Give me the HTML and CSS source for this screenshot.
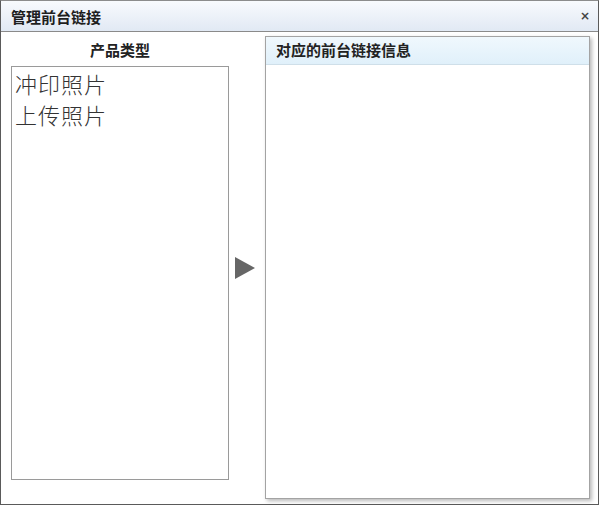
FILE: index.html
```html
<!DOCTYPE html>
<html lang="zh">
<head>
<meta charset="utf-8">
<title>管理前台链接</title>
<link rel="stylesheet" href="styles.css">
</head>
<body>
<div class="dialog">
  <div class="titlebar">
    <span class="title">管理前台链接</span>
    <span class="close">×</span>
  </div>
  <div class="content">
    <div class="left">
      <div class="label">产品类型</div>
      <div class="list">
        <div class="item">冲印照片</div>
        <div class="item">上传照片</div>
      </div>
    </div>
    <div class="arrow-col">
      <svg class="arrow" width="20" height="22" viewBox="0 0 20 22"><polygon points="0,0 20,11 0,22" fill="#666"/></svg>
    </div>
    <div class="panel">
      <div class="panel-head">对应的前台链接信息</div>
      <div class="panel-body"></div>
    </div>
  </div>
</div>
</body>
</html>
```
FILE: styles.css
```css
html, body {
  margin: 0;
  padding: 0;
  background: #fff;
}
body {
  font-family: "Noto Sans CJK SC", "Noto Sans", sans-serif;
  color: #222;
}
.dialog {
  width: 599px;
  height: 505px;
  box-sizing: border-box;
  border: 1px solid #5a5a5a;
  border-top-color: #8c8c8c;
  background: #fff;
  display: flex;
  flex-direction: column;
}
.titlebar {
  height: 30px;
  border-bottom: 1px solid #8a8a8a;
  background: linear-gradient(#f8fafd, #e1e9f4);
  display: flex;
  align-items: center;
  justify-content: space-between;
  padding: 0 8px 0 10px;
}
.title {
  font-size: 15px;
  font-weight: bold;
  color: #1e1e1e;
}
.close {
  font-family: "DejaVu Sans", sans-serif;
  font-size: 12px;
  font-weight: bold;
  color: #444;
  line-height: 1;
}
.content {
  display: flex;
  align-items: flex-start;
  padding: 4px 0 0 10px;
}
.left {
  width: 218px;
  display: flex;
  flex-direction: column;
}
.label {
  height: 30px;
  line-height: 28px;
  text-align: center;
  font-size: 15px;
  font-weight: bold;
  color: #222;
}
.list {
  height: 412px;
  border: 1px solid #9a9a9a;
  padding: 0 0 0 3px;
}
.item {
  font-size: 22px;
  line-height: 30px;
  letter-spacing: 1px;
  font-weight: 300;
  color: #333;
  padding-top: 1px;
}
.arrow-col {
  width: 36px;
  height: 463px;
  display: flex;
  align-items: center;
  justify-content: center;
  padding-right: 4px;
  box-sizing: border-box;
}
.panel {
  width: 325px;
  height: 463px;
  box-sizing: border-box;
  border: 1px solid #a3a3a3;
  box-shadow: 2px 2px 4px rgba(0,0,0,0.28);
  display: flex;
  flex-direction: column;
}
.panel-head {
  height: 27px;
  line-height: 26px;
  background: linear-gradient(#f0f8fd, #e0f0fa);
  border-bottom: 1px solid #cfdfe9;
  padding-left: 10px;
  font-size: 15px;
  font-weight: bold;
  color: #222;
}
.panel-body {
  flex: 1;
  background: #fff;
}
```
